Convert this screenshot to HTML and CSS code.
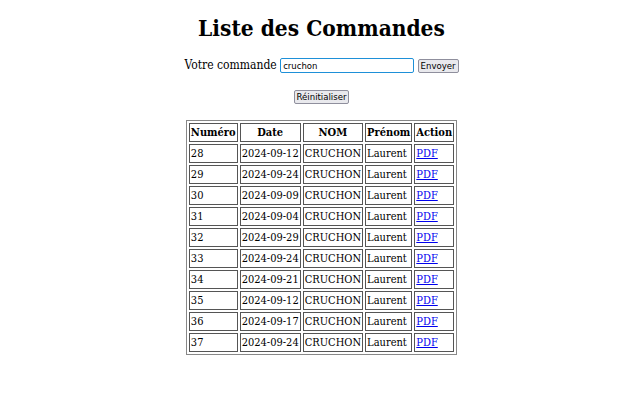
FILE: index.html
```html
<!DOCTYPE html>
<html lang="fr">
<head>
<meta charset="utf-8">
<link rel="stylesheet" href="styles.css">
</head>
<body>
<h1 class="title">Liste des Commandes</h1>
<form class="search">
  <label>Votre commande <input class="field" type="text" value="cruchon"></label>
  <button class="btn" type="button">Envoyer</button>
</form>
<div class="reset-row"><button class="btn" type="button">Réinitialiser</button></div>
<table class="orders">
  <tr><th>Numéro</th><th>Date</th><th>NOM</th><th>Prénom</th><th>Action</th></tr>
  <tr><td>28</td><td>2024-09-12</td><td>CRUCHON</td><td>Laurent</td><td><a href="#">PDF</a></td></tr>
  <tr><td>29</td><td>2024-09-24</td><td>CRUCHON</td><td>Laurent</td><td><a href="#">PDF</a></td></tr>
  <tr><td>30</td><td>2024-09-09</td><td>CRUCHON</td><td>Laurent</td><td><a href="#">PDF</a></td></tr>
  <tr><td>31</td><td>2024-09-04</td><td>CRUCHON</td><td>Laurent</td><td><a href="#">PDF</a></td></tr>
  <tr><td>32</td><td>2024-09-29</td><td>CRUCHON</td><td>Laurent</td><td><a href="#">PDF</a></td></tr>
  <tr><td>33</td><td>2024-09-24</td><td>CRUCHON</td><td>Laurent</td><td><a href="#">PDF</a></td></tr>
  <tr><td>34</td><td>2024-09-21</td><td>CRUCHON</td><td>Laurent</td><td><a href="#">PDF</a></td></tr>
  <tr><td>35</td><td>2024-09-12</td><td>CRUCHON</td><td>Laurent</td><td><a href="#">PDF</a></td></tr>
  <tr><td>36</td><td>2024-09-17</td><td>CRUCHON</td><td>Laurent</td><td><a href="#">PDF</a></td></tr>
  <tr><td>37</td><td>2024-09-24</td><td>CRUCHON</td><td>Laurent</td><td><a href="#">PDF</a></td></tr>
</table>
</body>
</html>
```
FILE: styles.css
```css
body {
  margin: 0;
  padding: 8px 8px 8px 20px;
  font-family: "DejaVu Serif Condensed", "DejaVu Serif", serif;
  font-size: 11px;
  line-height: 15px;
  color: #000;
  background: #fff;
}
.title {
  text-align: center;
  font-size: 22.5px;
  line-height: 30px;
  margin: 5px 0 14px;
}
.search {
  text-align: center;
  margin: 0 0 16px;
  line-height: 16px;
  font-size: 12px;
}
.field {
  font-family: "DejaVu Sans Condensed", "DejaVu Sans", sans-serif;
  font-size: 9.5px;
  width: 134px;
  height: 15px;
  box-sizing: border-box;
  border: 1px solid #1e90d8;
  border-radius: 2px;
  padding: 0 2px;
  vertical-align: baseline;
}
.btn {
  font-family: "DejaVu Sans Condensed", "DejaVu Sans", sans-serif;
  font-size: 9.5px;
  line-height: 12px;
  padding: 0 2px;
  border: 1px solid #8f8f9d;
  border-radius: 2px;
  background: #e9e9ed;
  color: #000;
}
.reset-row {
  text-align: center;
  margin-bottom: 16px;
}
.orders {
  margin: 0 auto;
  border: 1px solid #888;
  border-spacing: 2px;
}
.orders th, .orders td {
  border: 1px solid #555;
  padding: 1px;
  text-align: left;
}
.orders th { text-align: center; }
.orders a { color: #00e; }
```
